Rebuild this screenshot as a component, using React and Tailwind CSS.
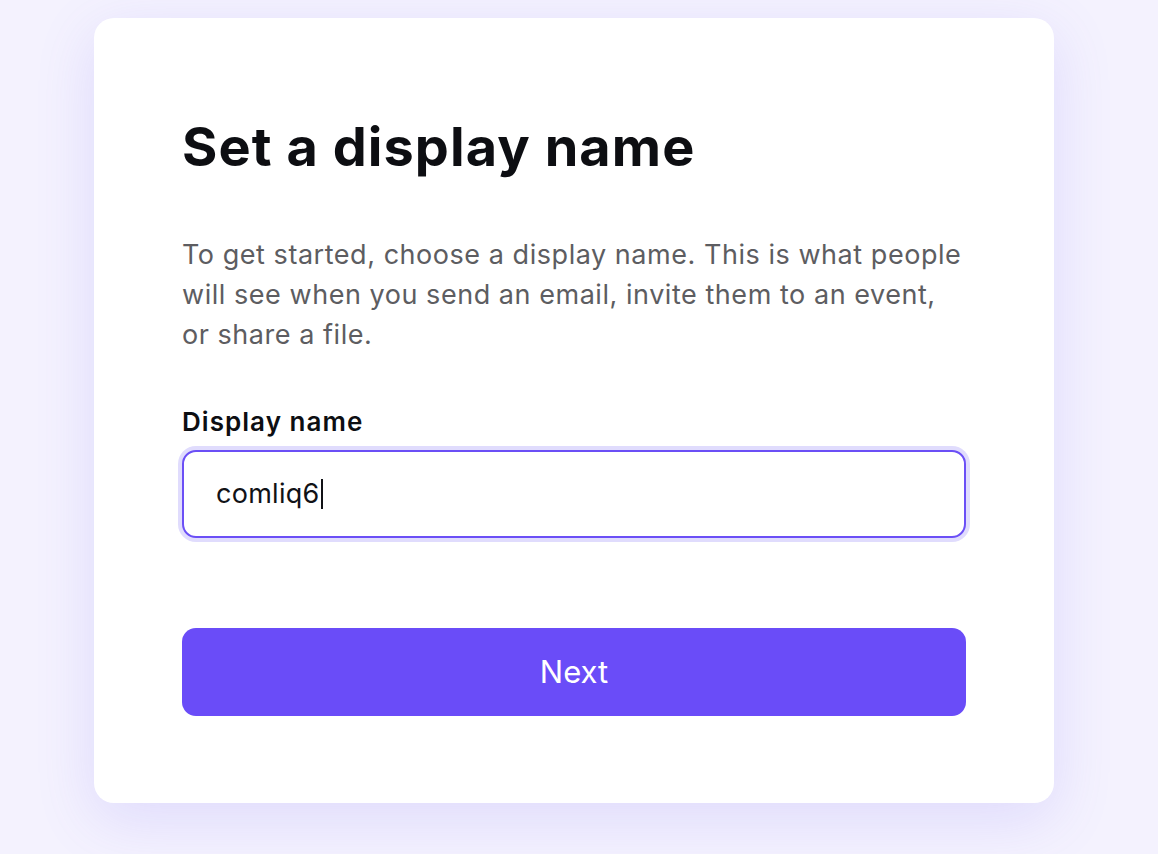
import { useState } from "react";

export default function App() {
  const [displayName] = useState("comliq6");

  const handleSubmit = (e) => {
    e.preventDefault();
  };

  return (
    <div
      className="min-h-screen w-full bg-[#f4f2fe] pt-[18px] pb-[51px]"
      style={{ fontFamily: "Inter, 'Noto Sans', sans-serif" }}
    >
      <div className="ml-[94px] w-[960px] rounded-[20px] bg-white px-[88px] pt-[102px] pb-[87px] shadow-[0_16px_60px_rgba(112,92,245,0.16)]">
        <h1 className="text-[54px] font-bold leading-none tracking-[0.02em] text-[#0d0e12]">
          Set a display name
        </h1>
        <p className="mt-[61px] text-[27px] leading-[40px] tracking-[0.02em] text-[#5d5d61]">
          To get started, choose a display name. This is what people will see when you send an email, invite them to an event, or share a file.
        </p>

        <form onSubmit={handleSubmit}>
          <label
            htmlFor="displayName"
            className="mt-[52px] block text-[26px] font-semibold leading-[30px] tracking-[0.04em] text-[#0d0e12]"
          >
            Display name
          </label>
          <div className="mt-[13px]">
            <div
              id="displayName"
              role="textbox"
              className="flex h-[88px] w-full items-center rounded-[14px] border-2 border-[#6b4ff6] bg-white pl-[32px] pr-4 text-[27px] tracking-[0.01em] text-[#111216] ring-4 ring-[#e0dcfd]"
            >
              <span>{displayName}</span>
              <span className="ml-[1px] h-[30px] w-[2px] bg-[#111216]" />
            </div>
          </div>

          <button
            type="submit"
            className="mt-[90px] flex h-[88px] w-full items-center justify-center rounded-[14px] bg-[#6a4cf8] text-[31px] text-white"
          >
            Next
          </button>
        </form>
      </div>
    </div>
  );
}
